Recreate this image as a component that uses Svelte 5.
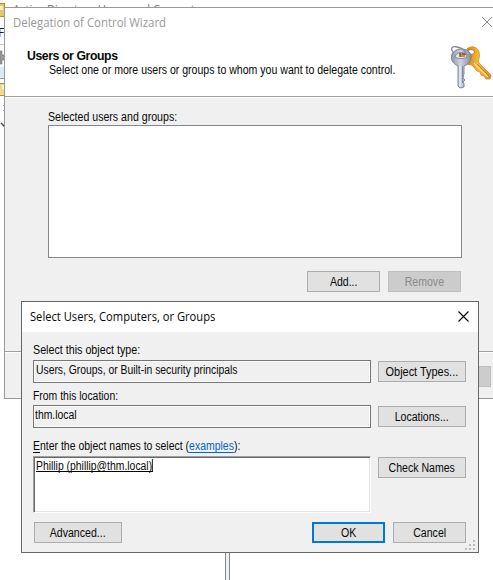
<script>
  const grip = [[8, 0], [4, 4], [8, 4], [0, 8], [4, 8], [8, 8]];
</script>

<div class="screen">
  <div class="console">
    <span class="apptitle">Active Directory Users and Computers</span>
    <svg class="strip" width="5" height="140" viewBox="0 0 5 140">
      <path d="M0 3.500H5" stroke="#a88a2c" /><path d="M0 4H5V17H0Z" fill="#e3c967" />
      <path d="M0 6H3V10H0Z" fill="#fff3bd" /><path d="M4.500 4V17M0 16.500H5" stroke="#b79224" />
      <path d="M0 44.500H5" stroke="#c6c6c6" />
      <path d="M0 51H2V55H5V60H2V64H0Z" fill="#999" stroke="#777" stroke-width=".6" />
      <path d="M0 67H5V78H0Z" fill="#dce9f7" /><path d="M0 78.500H5" stroke="#9099aa" />
      <path d="M0 83H5V96H0Z" fill="#edda91" /><path d="M0 83.500H5M0 95.500H5" stroke="#b29030" />
      <path d="M2 85H5V89H2Z" fill="#fff5ce" />
      <path d="M3 105L5 107M3 111L5 109" stroke="#aaa" /><path d="M1 123L5 127" stroke="#444" stroke-width="1.500" />
    </svg>
    <span class="menu">F</span>
    <div class="splitter"></div>
  </div>

  <section class="wizard">
    <header class="wizhead">
      <div class="wiztitle"><span class="t-wiz">Delegation of Control Wizard</span>
        <svg width="10" height="10" viewBox="0 0 10 10"><path d="M0 0L10 10M10 0L0 10" stroke="#888" /></svg>
      </div>
      <div class="intro">
        <div class="copy"><b>Users or Groups</b><p><span class="t-intro">Select one or more users or groups to whom you want to delegate control.</span></p></div>
        <svg class="keys" width="44" height="48" viewBox="0 0 44 48">
          <defs>
            <linearGradient id="gold"><stop offset="0" stop-color="#c98212" /><stop offset=".5" stop-color="#ffb938" /><stop offset="1" stop-color="#e09114" /></linearGradient>
            <linearGradient id="silver"><stop offset="0" stop-color="#8d93ab" /><stop offset=".45" stop-color="#cfd3e2" /><stop offset="1" stop-color="#868ca5" /></linearGradient>
          </defs>
          <path d="M18 5C22 1 29 3 30 8C31 12 30 15 29 18L42 31L41 35L37 35L35 32L32 31L31 28L28 27L23 21L17 20Z" fill="url(#gold)" stroke="#c98b32" stroke-width=".8" />
          <path d="M25 19L39 33" stroke="#ffe292" stroke-width="1.200" />
          <path d="M28 20L41 33" stroke="#c07c20" />
          <ellipse cx="22" cy="8" rx="3.500" ry="2.500" fill="#fff" stroke="#b47b28" />
          <path d="M9 22V42L11 44L15 43V40L14 38L16 36L14 34L15 30V22C21 20 24 14 21 9C17 3 6 4 3 10C1 17 5 20 9 22Z" fill="url(#silver)" stroke="#777d94" stroke-width=".9" />
          <path d="M11 22V42" stroke="#eef0f8" stroke-width="1.200" /><path d="M13.500 22V39" stroke="#858aa2" />
          <path d="M6 13C7 7 17 7 18 13C15 15 9 15 6 13Z" fill="#f2e3ce" stroke="#73768a" stroke-width=".8" />
          <path d="M10 9L16 9V13H11Z" fill="#c98f52" /><path d="M11 9V13M13 10H17" stroke="#493e40" />
          <path d="M4 8C1 4 3 2 8 3C13 4 16 6 17 10" fill="none" stroke="#868a98" stroke-width="1.300" />
        </svg>
      </div>
    </header>
    <div class="wizbody">
      <span class="caption"><span class="t-selected">Selected users and groups:</span></span>
      <div class="list"></div>
      <div class="actions"><button><span>Add...</span></button><button class="disabled"><span>Remove</span></button></div>
    </div>
    <footer><button class="disabled" aria-label="Cancel"></button></footer>
  </section>

  <section class="dialog">
    <header><span class="t-dialog">Select Users, Computers, or Groups</span>
      <svg width="11" height="11" viewBox="0 0 11 11"><path d="M.5 .5L10.500 10.500M10.500 .5L.5 10.500" stroke="#000" stroke-width="1.100" /></svg>
    </header>
    <main>
      <label class="l1"><span class="t-type">Select this object type:</span></label>
      <div class="row"><div class="field"><span class="t-principals">Users, Groups, or Built-in security principals</span></div><button><span class="t-object">Object Types...</span></button></div>
      <label class="l2"><span>From this location:</span></label>
      <div class="row"><div class="field loc"><span>thm.local</span></div><button><span>Locations...</span></button></div>
      <label class="l3"><span class="t-enter"><u>E</u>nter the object names to select (<a href="#examples">examples</a>):</span></label>
      <div class="row"><div class="names"><span class="t-name">Phillip (phillip@thm.local)</span></div><button><span>Check Names</span></button></div>
      <div class="bottom"><button class="wide"><span>Advanced...</span></button><button class="ok"><span>OK</span></button><button><span>Cancel</span></button></div>
    </main>
    <svg class="grip" width="10" height="10">{#each grip as [x, y]}<rect {x} {y} width="2" height="2" fill="#bcbcbc" />{/each}</svg>
  </section>
</div>

<style>
  .screen { position: relative; width: 493px; height: 580px; overflow: hidden; background: #fff; color: #080808; font: 12px/14px "Liberation Sans", Arial, sans-serif; white-space: nowrap; }
  .screen * { box-sizing: border-box; }
  .console, .strip { position: absolute; inset: 0 auto auto 0; }
  .console { width: 493px; height: 580px; }
  .apptitle { position: absolute; left: 13px; top: 2px; font: 12px/16px "Open Sans", sans-serif; color: #777; transform: scaleX(.93); transform-origin: left; }
  .menu { position: absolute; left: -2px; top: 25px; font: 12px/16px "Open Sans", sans-serif; color: #301020; }
  .splitter { position: absolute; left: 225px; top: 550px; width: 5px; height: 30px; border: solid #828790; border-width: 0 1px; background: #f0f0f0; }
  .wizard { position: absolute; left: 4px; top: 7px; width: 510px; height: 392px; border: 1px solid #999; background: #f0f0f0; display: flex; flex-direction: column; }
  .wizhead { height: 89px; background: #fff; border-bottom: 1px solid #a0a0a0; box-shadow: 0 1px #fff; flex-shrink: 0; }
  .wiztitle { display: flex; height: 29px; padding: 7px 0 0 8px; font: 12px/16px "Open Sans", sans-serif; color: #999; }
  .wiztitle span { width: 469px; transform: scaleX(.95); transform-origin: left; }
  .wiztitle svg { margin-top: 2px; }
  .intro { display: flex; padding-left: 22px; }
  .copy { width: 420px; padding-top: 11px; }
  .copy b { display: block; font-size: 13px; line-height: 15px; letter-spacing: -.45px; transform: scaleX(.945); transform-origin: left; }
  .copy p { margin: 0; padding-left: 22px; line-height: 15px; }
  .keys { flex-shrink: 0; margin-top: 7px; margin-left: 2px; }
  .wizbody { padding: 12px 0 0 43px; height: 254px; margin-top: 1px; }
  .caption { display: block; height: 15px; }
  .copy p span, .caption span, label span, .field span, .names span, button span { display: inline-block; transform: scaleX(.88); transform-origin: left; }
  button span { transform-origin: center; }
  .caption .t-selected { transform: scaleX(.884); }
  label span, .field span { transform: scaleX(.868); }
  label .t-type { transform: scaleX(.893); }
  label .t-enter { transform: scaleX(.873); }
  .field .t-principals { transform: scaleX(.863); }
  button .t-object { transform: scaleX(.91); }
  .list { width: 414px; height: 133px; background: #fff; border: 1px solid #828790; }
  .actions { display: flex; gap: 8px; padding: 13px 0 0 259px; }
  button { display: flex; align-items: center; justify-content: center; width: 73px; height: 21px; padding: 0; border: 1px solid #adadad; background: #e1e1e1; color: #080808; font: inherit; }
  .disabled { border-color: #bfbfbf; background: #ccc; color: #8a8a8a; }
  footer { height: 47px; border-top: 1px solid #a0a0a0; box-shadow: inset 0 1px #fff; padding: 14px 0 0 413px; }
  .dialog { position: absolute; left: 21px; top: 301px; width: 458px; height: 252px; border: 1px solid #686868; background: #f0f0f0; }
  .dialog header { display: flex; height: 30px; background: #fff; padding: 7px 10px 0 8px; font: 12px/16px "Open Sans", sans-serif; justify-content: space-between; }
  .dialog header span { transform: scaleX(.93); transform-origin: left; }
  .dialog header svg { margin-top: 2px; margin-right: -1px; }
  .dialog main { padding: 0 12px 0 11px; }
  label { display: block; }
  .l1 { height: 28px; padding-top: 11px; }
  .l2 { height: 22px; padding-top: 6px; }
  .l3 { height: 28px; padding-top: 11px; }
  .row { display: flex; justify-content: space-between; align-items: flex-start; }
  .row button { width: 88px; margin-top: 1px; }
  .field { width: 338px; height: 23px; border: 1px solid #777; box-shadow: inset -1px -1px #fff, inset 1px 1px #fafafa; padding: 2px 0 0 2px; }
  .loc { padding-left: 1px; }
  .names { width: 338px; height: 57px; background: #fff; border: 1px solid; border-color: #a0a0a0 #fff #fff #a0a0a0; box-shadow: inset 1px 1px #696969, inset -1px -1px #e3e3e3; padding: 2px; display: flex; }
  .names span { height: 13px; border: solid #000; border-width: 0 1.2px 1px 0; transform: scaleX(.865); }
  .bottom { display: flex; padding: 9px 0 0 1px; gap: 8px; }
  .bottom .wide { width: 88px; margin-right: 182px; }
  .ok { border: 2px solid #0078d7; }
  .grip { position: absolute; right: 3px; bottom: 2px; }
  u { text-underline-offset: 2px; }
  a { color: #0066cc; text-underline-offset: 2px; }
</style>
